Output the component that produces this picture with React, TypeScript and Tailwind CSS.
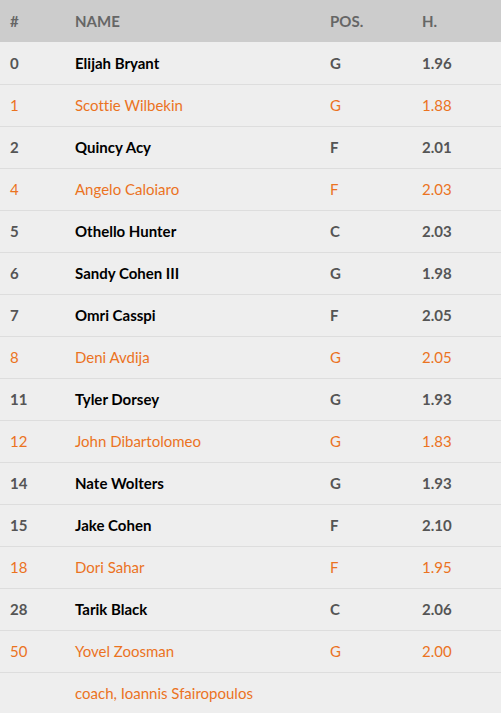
import React from 'react';

type Player = { num: string; name: string; pos: string; h: string; alt?: boolean };

const players: Player[] = [
  { num: '0', name: 'Elijah Bryant', pos: 'G', h: '1.96' },
  { num: '1', name: 'Scottie Wilbekin', pos: 'G', h: '1.88', alt: true },
  { num: '2', name: 'Quincy Acy', pos: 'F', h: '2.01' },
  { num: '4', name: 'Angelo Caloiaro', pos: 'F', h: '2.03', alt: true },
  { num: '5', name: 'Othello Hunter', pos: 'C', h: '2.03' },
  { num: '6', name: 'Sandy Cohen III', pos: 'G', h: '1.98' },
  { num: '7', name: 'Omri Casspi', pos: 'F', h: '2.05' },
  { num: '8', name: 'Deni Avdija', pos: 'G', h: '2.05', alt: true },
  { num: '11', name: 'Tyler Dorsey', pos: 'G', h: '1.93' },
  { num: '12', name: 'John Dibartolomeo', pos: 'G', h: '1.83', alt: true },
  { num: '14', name: 'Nate Wolters', pos: 'G', h: '1.93' },
  { num: '15', name: 'Jake Cohen', pos: 'F', h: '2.10' },
  { num: '18', name: 'Dori Sahar', pos: 'F', h: '1.95', alt: true },
  { num: '28', name: 'Tarik Black', pos: 'C', h: '2.06' },
  { num: '50', name: 'Yovel Zoosman', pos: 'G', h: '2.00', alt: true },
];

export default function App() {
  return (
    <div
      className="w-[501px] h-[713px] bg-[#eeeeee] overflow-hidden [font-variant-ligatures:none]"
      style={{ fontFamily: 'Lato, "Open Sans", sans-serif' }}
    >
      <table className="w-full border-collapse text-[15px]">
        <thead>
          <tr className="h-[42px] bg-[#cccccc] text-[#666666] text-left">
            <th className="w-[65px] pl-[10px] font-bold">#</th>
            <th className="w-[255px] pl-[10px] font-bold">NAME</th>
            <th className="w-[92px] pl-[10px] font-bold">POS.</th>
            <th className="pl-[10px] font-bold">H.</th>
          </tr>
        </thead>
        <tbody>
          {players.map((p) => (
            <tr key={p.num} className="h-[42px] border-b border-[#dddddd]">
              {p.alt ? (
                <>
                  <td className="pl-[10px] text-[#eb731f]">{p.num}</td>
                  <td className="pl-[10px] text-[#eb731f]">{p.name}</td>
                  <td className="pl-[10px] text-[#eb731f]">{p.pos}</td>
                  <td className="pl-[10px] text-[#eb731f]">{p.h}</td>
                </>
              ) : (
                <>
                  <td className="pl-[10px] font-bold text-[#555555]">{p.num}</td>
                  <td className="pl-[10px] font-bold text-black">{p.name}</td>
                  <td className="pl-[10px] font-bold text-[#555555]">{p.pos}</td>
                  <td className="pl-[10px] font-bold text-[#555555]">{p.h}</td>
                </>
              )}
            </tr>
          ))}
          <tr className="h-[42px]">
            <td></td>
            <td colSpan={3} className="pl-[10px] text-[#eb731f]">coach, Ioannis Sfairopoulos</td>
          </tr>
        </tbody>
      </table>
    </div>
  );
}
